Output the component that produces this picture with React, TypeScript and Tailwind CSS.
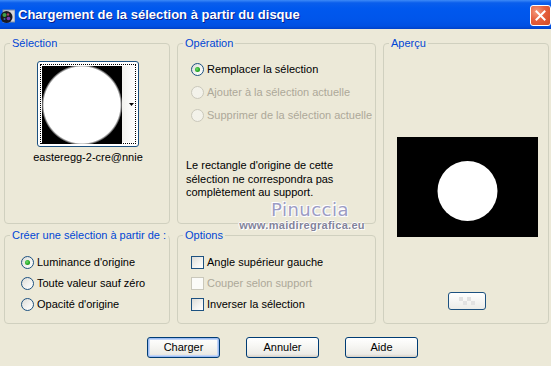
import React from "react";

function Radio({ checked = false, disabled = false }: { checked?: boolean; disabled?: boolean }) {
  return (
    <span
      className={`w-[13px] h-[13px] rounded-full border flex items-center justify-center shrink-0 ${
        disabled
          ? "border-[#CAC8BB] bg-[#F3F2EA]"
          : "border-[#1C5180] bg-[linear-gradient(135deg,#DCDCD7_0%,#F4F4F1_60%,#FFFFFF_100%)]"
      }`}
    >
      {checked && (
        <span className="w-[5px] h-[5px] rounded-full bg-[radial-gradient(circle_at_40%_40%,#6FE06F_0%,#21A121_60%,#1A8A1A_100%)]" />
      )}
    </span>
  );
}

function Check({ disabled = false }: { disabled?: boolean }) {
  return (
    <span
      className={`w-[13px] h-[13px] border shrink-0 ${
        disabled
          ? "border-[#CAC8BB] bg-[#FBFBF8]"
          : "border-[#1C5180] bg-[linear-gradient(135deg,#DCDCD7_0%,#F4F4F1_60%,#FFFFFF_100%)]"
      }`}
    />
  );
}

function Row({ children, label, disabled = false }: { children: React.ReactNode; label: string; disabled?: boolean }) {
  return (
    <div className="flex items-center gap-[3px] h-[13px]">
      {children}
      <span className={`leading-[13px] whitespace-nowrap ${disabled ? "text-[#ACA899]" : "text-black"}`}>{label}</span>
    </div>
  );
}

function Group({ title, className = "", children }: { title: string; className?: string; children: React.ReactNode }) {
  return (
    <fieldset className={`border border-[#D0D0BF] rounded-[4px] p-0 m-0 min-w-0 ${className}`}>
      <legend className="ml-[5px] px-[2px] leading-[13px] text-[#0046D5]">{title}</legend>
      {children}
    </fieldset>
  );
}

function XPButton({ label, isDefault = false }: { label: string; isDefault?: boolean }) {
  return (
    <div
      className={`w-[73px] h-[21px] rounded-[3px] border border-[#003C74] flex items-center justify-center leading-[13px] text-black bg-[linear-gradient(180deg,#FFFFFF_0%,#F7F7F4_40%,#ECEBE6_85%,#D6D0C5_100%)] ${
        isDefault ? "shadow-[inset_0_0_0_1px_#9DBCF3,inset_0_0_0_2px_#C3D6F7]" : ""
      }`}
    >
      {label}
    </div>
  );
}

export default function App() {
  return (
    <div className="w-[551px] h-[366px] bg-[#ECE9D8] relative overflow-hidden flex flex-col text-[11px] [font-family:'Liberation_Sans',Arial,sans-serif]">
      {/* Title bar */}
      <div className="h-[29px] shrink-0 flex items-start bg-[linear-gradient(180deg,#3D8AF7_0%,#0A5EEC_10%,#0058EE_30%,#0055EA_70%,#0050E2_90%,#0041C8_100%)]">
        <div className="w-[15px] h-[15px] mt-[9px] ml-[0px] shrink-0">
          <svg width="15" height="15" viewBox="0 0 15 15">
            <rect x="3" y="1" width="12" height="12" fill="#D8D8D8" stroke="#7A8CA8" strokeWidth="1" />
            <circle cx="6.5" cy="8" r="6" fill="#1A1A22" />
            <circle cx="4.5" cy="6" r="2" fill="#3FA04A" />
            <circle cx="8.5" cy="9.5" r="1.8" fill="#7A3FB0" />
            <circle cx="8" cy="5.5" r="1.2" fill="#B03F5A" />
            <circle cx="4.5" cy="10" r="1" fill="#3F6AB0" />
          </svg>
        </div>
        <div className="ml-[3px] mt-[7px] flex-1 text-white font-bold text-[13px] leading-[16px] whitespace-nowrap [text-shadow:1px_1px_0_#0A1E8C]">
          Chargement de la sélection à partir du disque
        </div>
        <div className="w-[21px] h-[21px] mt-[5px] shrink-0 rounded-[3px] border border-white flex items-center justify-center bg-[radial-gradient(circle_at_30%_30%,#F59A7C_0%,#E5603E_45%,#D24A22_100%)]">
          <svg width="11" height="11" viewBox="0 0 11 11">
            <path d="M1.5 1.5 L9.5 9.5 M9.5 1.5 L1.5 9.5" stroke="white" strokeWidth="2" strokeLinecap="square" />
          </svg>
        </div>
      </div>

      {/* Body */}
      <div className="flex flex-col px-[4px] pt-[8px]">
        <div className="grid grid-cols-[166px_199px_166px] grid-rows-[187px_95px] gap-x-[7px] gap-y-[5px]">
          {/* Sélection */}
          <Group title="Sélection" className="col-start-1 row-start-1">
            <div className="flex flex-col items-center pt-[11px] pl-[2px]">
              <div className="w-[102px] h-[86px] rounded-[3px] border border-[#1C5180] bg-white px-[2px] py-[2px] flex">
                <div className="flex-1 border border-dotted border-black p-[1px] flex">
                  <svg width="80" height="78" viewBox="0 0 80 78" className="shrink-0">
                    <defs>
                      <radialGradient id="soft" cx="50%" cy="50%" r="50%">
                        <stop offset="0%" stopColor="#FFFFFF" />
                        <stop offset="94%" stopColor="#FFFFFF" />
                        <stop offset="100%" stopColor="#000000" />
                      </radialGradient>
                    </defs>
                    <rect x="0" y="0" width="80" height="78" fill="#000" />
                    <circle cx="40" cy="39" r="40.5" fill="url(#soft)" />
                  </svg>
                  <div className="flex-1 flex items-center justify-end bg-[linear-gradient(90deg,#F2F2EE_0%,#FFFFFF_100%)]">
                    <svg width="5" height="3" viewBox="0 0 5 3">
                      <path d="M0 0 H5 L2.5 3 Z" fill="#000" />
                    </svg>
                  </div>
                </div>
              </div>
              <div className="mt-[4px] leading-[13px] text-black">easteregg-2-cre@nnie</div>
            </div>
          </Group>

          {/* Opération */}
          <Group title="Opération" className="col-start-2 row-start-1">
            <div className="flex flex-col pt-[13px]">
              <div className="flex flex-col gap-[10px] pl-[13px]">
                <Row label="Remplacer la sélection">
                  <Radio checked />
                </Row>
                <Row label="Ajouter à la sélection actuelle" disabled>
                  <Radio disabled />
                </Row>
                <Row label="Supprimer de la sélection actuelle" disabled>
                  <Radio disabled />
                </Row>
              </div>
              <p className="mt-[37px] pl-[8px] leading-[13.5px] text-black">
                Le rectangle d'origine de cette
                <br />
                sélection ne correspondra pas
                <br />
                complètement au support.
              </p>
            </div>
          </Group>

          {/* Aperçu */}
          <Group title="Aperçu" className="col-start-3 row-start-1 row-span-2">
            <div className="flex flex-col items-center pt-[87px] pl-[2px]">
              <svg width="141" height="100" viewBox="0 0 141 100">
                <rect x="0" y="0" width="141" height="100" fill="#000" />
                <circle cx="70.5" cy="54" r="30" fill="#FFF" />
              </svg>
              <div className="mt-[55px] w-[38px] h-[18px] rounded-[3px] border border-[#1C5180] bg-[linear-gradient(180deg,#FFFFFF_0%,#ECECE8_100%)] flex items-center justify-center">
                <svg width="28" height="12" viewBox="0 0 28 12">
                  <rect x="6" y="2" width="4" height="4" fill="#E2E2E2" />
                  <rect x="14" y="2" width="4" height="4" fill="#E2E2E2" />
                  <rect x="10" y="6" width="4" height="4" fill="#E2E2E2" />
                  <rect x="18" y="6" width="4" height="4" fill="#E2E2E2" />
                </svg>
              </div>
            </div>
          </Group>

          {/* Créer */}
          <Group title="Créer une sélection à partir de :" className="col-start-1 row-start-2">
            <div className="flex flex-col gap-[8px] pt-[14px] pl-[16px]">
              <Row label="Luminance d'origine">
                <Radio checked />
              </Row>
              <Row label="Toute valeur sauf zéro">
                <Radio />
              </Row>
              <Row label="Opacité d'origine">
                <Radio />
              </Row>
            </div>
          </Group>

          {/* Options */}
          <Group title="Options" className="col-start-2 row-start-2">
            <div className="flex flex-col gap-[8px] pt-[14px] pl-[13px]">
              <Row label="Angle supérieur gauche">
                <Check />
              </Row>
              <Row label="Couper selon support" disabled>
                <Check disabled />
              </Row>
              <Row label="Inverser la sélection">
                <Check />
              </Row>
            </div>
          </Group>
        </div>

        {/* Buttons */}
        <div className="flex gap-[26px] pl-[143px] mt-[13px]">
          <XPButton label="Charger" isDefault />
          <XPButton label="Annuler" />
          <XPButton label="Aide" />
        </div>
      </div>

      {/* Watermark overlay */}
      <div className="absolute left-[240px] top-[199px] w-[124px] flex flex-col items-center pointer-events-none">
        <div className="ml-[16px] text-[18px] leading-[21px] tracking-[0.5px] text-[#9C9CC4] [font-family:'DejaVu_Sans',sans-serif] [text-shadow:1px_1px_0_#FFFFFF,-1px_-1px_0_#FFFFFF,1px_-1px_0_#F4F4F4,-1px_1px_0_#F4F4F4]">
          Pinuccia
        </div>
        <div className="text-[11px] leading-[11px] font-bold tracking-[0.3px] text-[#83839A] [text-shadow:1px_1px_0_#FFFFFF,-1px_0_0_#FFFFFF,0_-1px_0_#FFFFFF]">
          www.maidiregrafica.eu
        </div>
      </div>
    </div>
  );
}
